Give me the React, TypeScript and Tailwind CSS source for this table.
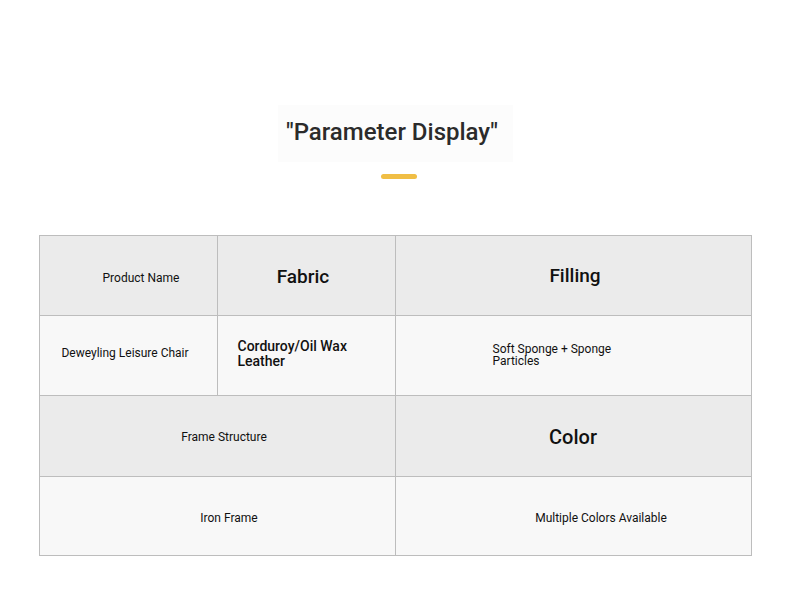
import React from 'react';

/* ---------- cells ---------- */
const Cell: React.FC<{ head?: boolean; className?: string; children: React.ReactNode }> = ({
  head,
  className = '',
  children,
}) => (
  <div
    className={`flex items-center border-r border-b border-[#bdbdbd] text-[#111] ${
      head ? 'bg-[#ebebeb]' : 'bg-[#f8f8f8]'
    } ${className}`}
  >
    {children}
  </div>
);

/* ---------- main ---------- */
export default function App() {
  return (
    <div
      className="w-[790px] h-[615px] bg-white flex flex-col items-center"
      style={{ fontFamily: 'Roboto, "Liberation Sans", sans-serif' }}
    >
      {/* title */}
      <div className="mt-[105px] w-[235px] h-[57px] bg-[#fcfcfc] flex items-center justify-center">
        <h1 className="mr-[6px] mb-[4px] text-[24px] font-medium text-[#2b2b2b]">"Parameter Display"</h1>
      </div>
      <div className="mt-[12px] ml-[8px] w-[36px] h-[5px] rounded-full bg-[#f0be45]" />

      {/* table */}
      <div className="mt-[56px] w-[713px] grid grid-cols-[178px_178px_356px] grid-rows-[80px_80px_81px_79px] border-l border-t border-[#bdbdbd]">
        <Cell head className="justify-center pl-[26px] pt-[4px]">
          <span className="text-[12px]">Product Name</span>
        </Cell>
        <Cell head className="justify-center pr-[6px] pt-[4px]">
          <span className="text-[19px] font-medium">Fabric</span>
        </Cell>
        <Cell head className="justify-center pl-[4px] pt-[1px]">
          <span className="text-[19px] font-medium">Filling</span>
        </Cell>

        <Cell className="justify-center pr-[6px] pb-[5px]">
          <span className="text-[12px]">Deweyling Leisure Chair</span>
        </Cell>
        <Cell className="pl-[20px] pb-[4px]">
          <span className="block w-[130px] text-[14px] leading-[15px] font-medium">Corduroy/Oil Wax Leather</span>
        </Cell>
        <Cell className="pl-[97px] pb-[1px]">
          <span className="block w-[130px] text-[12px] leading-[12px]">Soft Sponge + Sponge Particles</span>
        </Cell>

        <Cell head className="col-span-2 justify-center pl-[14px] pt-[2px]">
          <span className="text-[12px]">Frame Structure</span>
        </Cell>
        <Cell head className="justify-center pt-[1px]">
          <span className="text-[20px] font-medium">Color</span>
        </Cell>

        <Cell className="col-span-2 justify-center pl-[24px] pt-[4px]">
          <span className="text-[12px]">Iron Frame</span>
        </Cell>
        <Cell className="justify-center pl-[56px] pt-[4px]">
          <span className="text-[12px]">Multiple Colors Available</span>
        </Cell>
      </div>
    </div>
  );
}
